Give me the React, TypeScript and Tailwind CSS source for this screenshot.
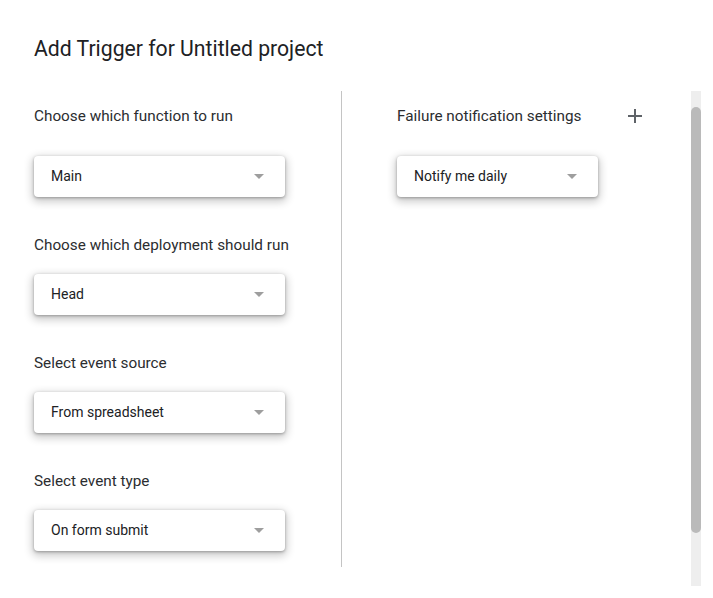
import React from "react";

const FONT = "font-['Roboto','Liberation_Sans',sans-serif]";

function Dropdown({ value, width }: { value: string; width: string }) {
  return (
    <div
      className={`flex h-[41px] ${width} items-center justify-between rounded-[4px] bg-white pl-[17px] pr-[21px] shadow-[0_1px_3px_rgba(0,0,0,0.3),0_3px_8px_2px_rgba(0,0,0,0.2)]`}
    >
      <span className="text-[14px] text-[#202124]">{value}</span>
      <span className="h-0 w-0 border-x-[5px] border-t-[5px] border-x-transparent border-t-[#9e9e9e]" />
    </div>
  );
}

function Section({
  label,
  value,
  first,
}: {
  label: string;
  value: string;
  first?: boolean;
}) {
  return (
    <section className={first ? "flex flex-col" : "mt-[38px] flex flex-col"}>
      <h3 className="h-5 text-[15.3px] leading-5 text-[#2b2d30]">{label}</h3>
      <div className={first ? "mt-[30px]" : "mt-[19px]"}>
        <Dropdown value={value} width="w-[251px]" />
      </div>
    </section>
  );
}

const LEFT_SECTIONS = [
  { id: "fn", label: "Choose which function to run", value: "Main" },
  { id: "dep", label: "Choose which deployment should run", value: "Head" },
  { id: "src", label: "Select event source", value: "From spreadsheet" },
  { id: "type", label: "Select event type", value: "On form submit" },
] as const;

export default function App() {
  return (
    <div className={`flex h-[598px] w-[713px] flex-col overflow-hidden bg-white ${FONT}`}>
      <h2 className="pl-[34px] pt-[35px] text-[21.2px] leading-7 text-[#202124]">
        Add Trigger for Untitled project
      </h2>

      <div className="mt-[28px] flex h-[495px] pr-[12px]">
        <div className="flex flex-1 items-start">
          <div className="flex h-[476px] w-[342px] flex-col border-r border-[#c4c4c4] pl-[34px] pt-[15px]">
            {LEFT_SECTIONS.map(function renderSection(section, i) {
              return (
                <Section
                  key={section.id}
                  label={section.label}
                  value={section.value}
                  first={i === 0}
                />
              );
            })}
          </div>

          <div className="flex flex-col pl-[55px] pt-[15px]">
            <div className="flex h-5 w-[245px] items-center justify-between">
              <h3 className="text-[15.3px] leading-5 text-[#2b2d30]">
                Failure notification settings
              </h3>
              <svg width="14" height="14" viewBox="0 0 14 14">
                <path d="M7 0v14M0 7h14" stroke="#5f6368" strokeWidth="2" fill="none" />
              </svg>
            </div>
            <div className="mt-[30px]">
              <Dropdown value="Notify me daily" width="w-[201px]" />
            </div>
          </div>
        </div>

        <div className="flex w-[10px] flex-col bg-[#eeeeee] pb-[53px] pt-[16px]">
          <div className="flex-1 rounded-full bg-[#bababa]" />
        </div>
      </div>
    </div>
  );
}
